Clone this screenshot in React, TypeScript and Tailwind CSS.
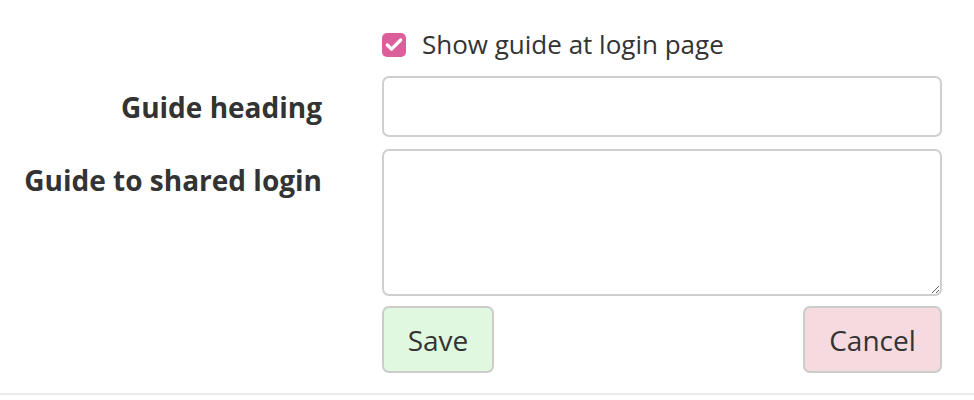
import { Check } from 'lucide-react';

export default function App() {
  return (
    <div className="w-[974px] h-[400px] bg-white text-[#333] font-['Open_Sans',sans-serif]">
      <div className="border-b-2 border-[#ebebeb] pt-[33px] pb-[20px]">
        <div className="grid grid-cols-[322px_560px] gap-x-[60px] gap-y-[12px]">
          {/* checkbox row */}
          <div />
          <label className="flex items-center gap-[16px] h-[24px] text-[26px]">
            <span className="flex items-center justify-center w-[24px] h-[24px] rounded-[5px] bg-[#dc5f9b]">
              <Check className="w-[20px] h-[20px] text-white" strokeWidth={4} />
            </span>
            <span className="leading-none -mt-[2px]">Show guide at login page</span>
          </label>

          {/* heading row */}
          <div className="flex items-center justify-end h-[61px] mt-[7px] text-[28px] font-bold">
            Guide heading
          </div>
          <input
            type="text"
            className="h-[61px] mt-[7px] rounded-[7px] border-2 border-[#cfcfcf] px-3 text-[24px] outline-none"
          />

          {/* guide row */}
          <div className="flex items-center justify-end h-[62px] text-[28px] font-bold">
            Guide to shared login
          </div>
          <textarea className="h-[147px] rounded-[7px] border-2 border-[#cfcfcf] px-3 py-2 text-[24px] outline-none" />

          {/* buttons */}
          <div />
          <div className="flex justify-between -mt-[2px]">
            <button className="w-[112px] h-[67px] rounded-[7px] border-2 border-[#cccccc] bg-[#e0f7e0] text-[28px]">
              Save
            </button>
            <button className="w-[139px] h-[67px] rounded-[7px] border-2 border-[#cccccc] bg-[#f5dadf] text-[28px]">
              Cancel
            </button>
          </div>
        </div>
      </div>
    </div>
  );
}
